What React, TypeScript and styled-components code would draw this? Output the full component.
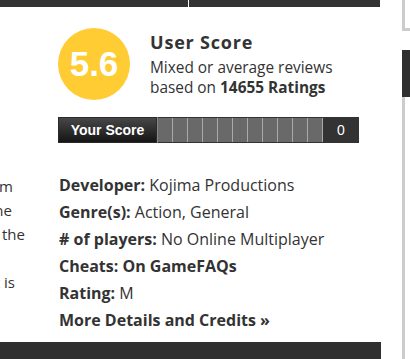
import styled, { createGlobalStyle } from 'styled-components';

const GlobalStyle = createGlobalStyle`
  html, body {
    margin: 0;
    padding: 0;
    background: #fff;
  }
  body {
    font-family: "Open Sans", Lato, Arial, sans-serif;
    color: #333;
    overflow: hidden;
  }
`

const Page = styled.div`
  display: flex;
  width: 410px;
  height: 359px;
  overflow: hidden;
`

const MainColumn = styled.div`
  width: 381px;
  display: flex;
  flex-direction: column;
`

const TopNav = styled.div`
  display: flex;
  gap: 1px;
  width: 380px;
  height: 7px;
`

const NavTab = styled.div<{ $width: number }>`
  width: ${p => p.$width}px;
  background: #333;
`

const Content = styled.div`
  flex: 1;
  display: flex;
`

const SummaryEdge = styled.div`
  width: 30px;
  padding-top: 167px;
  overflow: hidden;
  font-size: 15px;
  line-height: 24px;
`

const EdgeLine = styled.div<{ $inset: number }>`
  display: flex;
  justify-content: flex-end;
  white-space: nowrap;
  height: 24px;
  padding-right: ${p => p.$inset}px;
`

const ScoreColumn = styled.div`
  padding: 21px 0 0 28px;
  display: flex;
  flex-direction: column;
`

const ScoreHeader = styled.div`
  display: flex;
  gap: 20px;
`

const ScoreCircle = styled.div`
  width: 72px;
  height: 72px;
  border-radius: 50%;
  background: #fc3;
  color: #fff;
  display: flex;
  align-items: center;
  justify-content: center;
  font-family: "Liberation Sans", Arial, sans-serif;
  font-weight: bold;
  font-size: 35px;
`

const ScoreText = styled.div`
  padding-top: 3px;
`

const ScoreTitle = styled.div`
  font-weight: 700;
  font-size: 18px;
  letter-spacing: 0.8px;
  line-height: 22px;
  margin-bottom: 5px;
`

const ScoreDesc = styled.div`
  font-size: 15.4px;
  line-height: 20px;

  strong {
    font-weight: 700;
  }
`

const RateBar = styled.div`
  margin-top: 17px;
  display: flex;
  width: 301px;
  height: 26px;
  background: #333;
`

const RateButton = styled.div`
  width: 99px;
  border: 1px solid #2a2a2a;
  box-sizing: border-box;
  background: linear-gradient(#474747, #151515);
  color: #fff;
  font-family: "Liberation Sans", Arial, sans-serif;
  font-weight: bold;
  font-size: 14px;
  display: flex;
  align-items: center;
  justify-content: center;
`

const Cells = styled.div`
  display: flex;
  padding: 1px 0;
  border-left: 1px solid #888;
`

const Cell = styled.div`
  width: 14px;
  background: #696969;
  border-right: 1px solid #aaa;
`

const UserRating = styled.div`
  flex: 1;
  color: #fff;
  font-family: "Liberation Sans", Arial, sans-serif;
  font-size: 14px;
  display: flex;
  align-items: center;
  justify-content: center;
`

const Details = styled.ul`
  list-style: none;
  margin: 29px 0 0 1px;
  padding: 0;
  font-size: 16px;
  line-height: 27px;
`

const DetailItem = styled.li`
  white-space: nowrap;

  b {
    font-weight: 700;
  }
`

const BottomBar = styled.div`
  height: 17px;
  background: #2f2f2f;
`

const RightRail = styled.div`
  margin-left: 21px;
  flex: 1;
  display: flex;
  flex-direction: column;
`

const RailBox = styled.div`
  height: 28px;
  border-left: 3px solid #ccc;
  border-bottom: 3px solid #ccc;
`

const RailBlock = styled.div`
  margin-top: 19px;
  height: 47px;
  background: #2f2f2f;
`

const RailLine = styled.div`
  flex: 1;
  border-left: 3px solid #ccc;
`

const App = () => {
  const cells = Array.from({ length: 11 }, (_, i) => i);

  return (
    <>
      <GlobalStyle />
      <Page>
        <MainColumn>
          <TopNav>
            <NavTab $width={188} />
            <NavTab $width={191} />
          </TopNav>
          <Content>
            <SummaryEdge>
              <EdgeLine $inset={17}>by the same team from</EdgeLine>
              <EdgeLine $inset={18}>are those of the one</EdgeLine>
              <EdgeLine $inset={5}>story follows the</EdgeLine>
              <EdgeLine $inset={0}></EdgeLine>
              <EdgeLine $inset={15}>the world it is</EdgeLine>
            </SummaryEdge>
            <ScoreColumn>
              <ScoreHeader>
                <ScoreCircle>5.6</ScoreCircle>
                <ScoreText>
                  <ScoreTitle>User Score</ScoreTitle>
                  <ScoreDesc>
                    Mixed or average reviews
                    <br />
                    based on <strong>14655 Ratings</strong>
                  </ScoreDesc>
                </ScoreText>
              </ScoreHeader>
              <RateBar>
                <RateButton>Your Score</RateButton>
                <Cells>
                  {cells.map(i => <Cell key={i} />)}
                </Cells>
                <UserRating>0</UserRating>
              </RateBar>
              <Details>
                <DetailItem><b>Developer:</b> Kojima Productions</DetailItem>
                <DetailItem><b>Genre(s):</b> Action, General</DetailItem>
                <DetailItem><b># of players:</b> No Online Multiplayer</DetailItem>
                <DetailItem><b>Cheats: On GameFAQs</b></DetailItem>
                <DetailItem><b>Rating:</b> M</DetailItem>
                <DetailItem><b>More Details and Credits »</b></DetailItem>
              </Details>
            </ScoreColumn>
          </Content>
          <BottomBar />
        </MainColumn>
        <RightRail>
          <RailBox />
          <RailBlock />
          <RailLine />
        </RightRail>
      </Page>
    </>
  )
}

export default App;
